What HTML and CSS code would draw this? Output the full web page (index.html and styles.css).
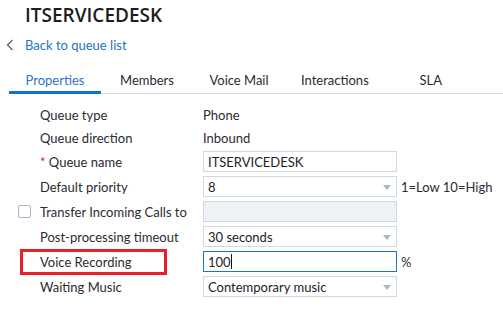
FILE: index.html
```html
<!DOCTYPE html>
<html lang="en">
<head>
    <meta charset="UTF-8">
    <title>ITSERVICEDESK</title>
    <link rel="stylesheet" href="styles.css">
</head>
<body>
    <h1 class="title">ITSERVICEDESK</h1>
    <a class="back-link" href="#">
        <svg class="back-icon" width="8" height="12" viewBox="0 0 8 12"><path d="M6.5 1 L1.5 6 L6.5 11" fill="none" stroke="#5a6470" stroke-width="1.3"/></svg>
        <span>Back to queue list</span>
    </a>
    <div class="tabs">
        <div class="tab active">Properties</div>
        <div class="tab">Members</div>
        <div class="tab">Voice Mail</div>
        <div class="tab">Interactions</div>
        <div class="tab">SLA</div>
    </div>
    <div class="form">
        <div class="label">Queue type</div>
        <div class="value">Phone</div>
        <div></div>

        <div class="label">Queue direction</div>
        <div class="value">Inbound</div>
        <div></div>

        <div class="label"><span class="required">*</span>&nbsp;Queue name</div>
        <div class="field">ITSERVICEDESK</div>
        <div></div>

        <div class="label">Default priority</div>
        <div class="field select">8</div>
        <div class="hint">1=Low 10=High</div>

        <div class="label check-label"><span class="checkbox"></span>Transfer Incoming Calls to</div>
        <div class="field disabled"></div>
        <div></div>

        <div class="label">Post-processing timeout</div>
        <div class="field select">30 seconds</div>
        <div></div>

        <div class="label marked">Voice Recording</div>
        <div class="field focused">100<span class="caret"></span></div>
        <div class="hint">%</div>

        <div class="label">Waiting Music</div>
        <div class="field select">Contemporary music</div>
        <div></div>
    </div>
</body>
</html>
```

FILE: styles.css
```css
body {
    margin: 0;
    font-family: 'Lato', 'Liberation Sans', sans-serif;
    font-size: 13px;
    color: #2b2b30;
    background: #ffffff;
}
.title {
    margin: 0;
    padding-left: 25px;
    height: 30px;
    line-height: 30px;
    font-family: 'Open Sans', 'Lato', sans-serif;
    font-size: 19px;
    font-weight: 600;
    color: #1d1d22;
}
.back-link {
    display: flex;
    align-items: center;
    height: 30px;
    padding-left: 6px;
    color: #1f73c4;
    text-decoration: none;
}
.back-icon {
    margin-right: 11px;
}
.tabs {
    display: flex;
    margin-left: 9px;
    border-bottom: 1px solid #d6dce3;
}
.tab {
    min-width: 92px;
    padding: 8px 16px 0;
    box-sizing: border-box;
    height: 34px;
    line-height: 24px;
    text-align: center;
    border-bottom: 3px solid transparent;
    margin-bottom: -1px;
    color: #2b2b30;
}
.tab.active {
    color: #2f70d2;
    border-bottom-color: #0a74da;
}
.form {
    display: grid;
    grid-template-columns: 203px 194px auto;
    grid-template-rows: 19px 19px;
    grid-auto-rows: 21px;
    row-gap: 4px;
    padding-top: 11px;
}
.label {
    display: flex;
    align-items: center;
    padding-left: 40px;
}
.value {
    display: flex;
    align-items: center;
}
.required {
    color: #d9262b;
}
.check-label {
    padding-left: 18px;
}
.checkbox {
    width: 11px;
    height: 11px;
    border: 1px solid #a9b6c6;
    border-radius: 2px;
    margin-right: 9px;
}
.marked {
    box-sizing: border-box;
    width: 147px;
    margin: -2px 0 -3px 20px;
    padding-left: 17px;
    border: 3px solid #e8202a;
}
.field {
    position: relative;
    display: flex;
    align-items: center;
    box-sizing: border-box;
    height: 21px;
    padding: 0 4px;
    border: 1px solid #cfd9e5;
    color: #222226;
}
.field.disabled {
    background: #eef2f7;
}
.field.focused {
    border-color: #1c74cc;
}
.caret {
    width: 1px;
    height: 15px;
    background: #111111;
}
.select::after {
    content: '';
    position: absolute;
    right: 5px;
    top: 8px;
    border-left: 4px solid transparent;
    border-right: 4px solid transparent;
    border-top: 5px solid #a8b6c8;
}
.hint {
    display: flex;
    align-items: center;
    padding-left: 4px;
    white-space: nowrap;
}
```
